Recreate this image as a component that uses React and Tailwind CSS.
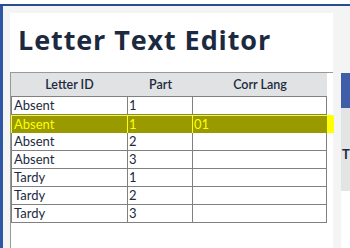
import React from "react";

const rows = [
  { id: "Absent", part: "1", lang: "" },
  { id: "Absent", part: "1", lang: "01", selected: true },
  { id: "Absent", part: "2", lang: "" },
  { id: "Absent", part: "3", lang: "" },
  { id: "Tardy", part: "1", lang: "" },
  { id: "Tardy", part: "2", lang: "" },
  { id: "Tardy", part: "3", lang: "" },
];

function Row({ r }) {
  if (r.selected) {
    return (
      <div className="flex h-[18px] bg-[#999900] text-[#ffff00] border-t border-[#ffff00]">
        <div className="w-[117px] shrink-0 pl-[2px] border-l border-r border-[#ffff00] leading-[17px]">{r.id}</div>
        <div className="w-[65px] shrink-0 pl-[1px] border-r border-[#ffff00] leading-[17px]">{r.part}</div>
        <div className="w-[134px] shrink-0 pl-[1px] leading-[17px]">{r.lang}</div>
        <div className="w-[7px] shrink-0 bg-[#ffff00]" />
      </div>
    );
  }
  return (
    <div className="flex h-[18px]">
      <div className="flex w-[316px] shrink-0 border-b border-[#808080]">
        <div className="w-[117px] shrink-0 pl-[2px] border-l border-r border-[#808080] leading-[17px]">{r.id}</div>
        <div className="w-[65px] shrink-0 pl-[1px] border-r border-[#808080] leading-[17px]">{r.part}</div>
        <div className="w-[134px] shrink-0 pl-[1px] border-r border-[#808080] leading-[17px]">{r.lang}</div>
      </div>
    </div>
  );
}

export default function App() {
  return (
    <div className="w-[350px] h-[248px] overflow-hidden bg-white pt-[4px] font-['Lato',sans-serif]">
      <div className="h-[2px] bg-[#2b4a92]" />
      <div className="flex h-[242px]">
        <div className="w-[3px] shrink-0 bg-[#2f55a5]" />
        <div className="flex-1 min-w-0 flex bg-[#f4f4f4] pl-[7px] pt-[7px]">
          <div className="w-[323px] shrink-0 bg-white flex flex-col">
            <h1 className="pl-[8px] pt-[10px] h-[59px] font-['Open_Sans',sans-serif] text-[27px] font-bold text-[#1c2a40] leading-[34px] tracking-[0.9px] whitespace-nowrap">
              Letter Text Editor
            </h1>
            <div className="flex-1 border-t border-l border-[#999999] text-[13px] text-[#1c2a40]">
              <div className="flex h-[24px] bg-[#e1e2e3] text-[12.5px] font-semibold w-[316px] border-b border-[#808080]">
                <div className="w-[117px] shrink-0 text-center leading-[24px]">Letter ID</div>
                <div className="w-[65px] shrink-0 text-center leading-[24px]">Part</div>
                <div className="w-[134px] shrink-0 text-center leading-[24px]">Corr Lang</div>
              </div>
              {rows.map((r, i) => (
                <Row key={i} r={r} />
              ))}
            </div>
          </div>
          <div className="w-[8px] shrink-0" />
          <div className="flex-1 min-w-0 flex flex-col pt-[60px] overflow-hidden">
            <div className="h-[35px] bg-[#3f5ea8]" />
            <div className="h-[83px] bg-[#e3e4e4] pt-[39px] text-[13px] font-bold text-[#1c2a40] leading-[14px] pl-[1px]">
              T
            </div>
            <div className="flex-1 bg-white" />
          </div>
        </div>
      </div>
    </div>
  );
}
